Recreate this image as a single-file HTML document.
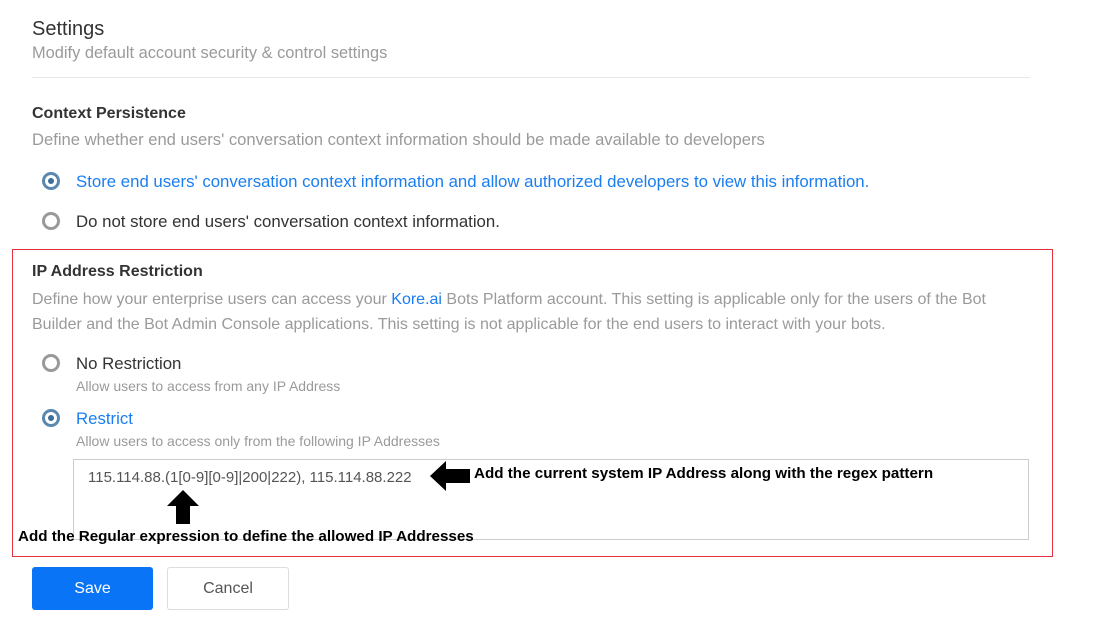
<!DOCTYPE html>
<html><head><style>
body{margin:0;width:1094px;height:640px;background:#fff;font-family:"Liberation Sans",sans-serif;position:relative;overflow:hidden}
.a{position:absolute;white-space:nowrap}
.g{color:#9a9a9a}
.t{color:#333}
.b{color:#1a7ef0}
.radio{position:absolute;width:12px;height:12px;border:3px solid #999;border-radius:50%;box-sizing:content-box}
.radio.on{border-color:#5a88b0}
.radio.on::after{content:"";position:absolute;left:3px;top:3px;width:6px;height:6px;border-radius:50%;background:#3d6e99}
</style></head><body>
<div class="a t" style="left:32px;top:18px;font-size:20px">Settings</div>
<div class="a g" style="left:32px;top:44px;font-size:16.4px">Modify default account security &amp; control settings</div>
<div class="a" style="left:32px;top:77px;width:998px;height:1px;background:#e6e6e6"></div>
<div class="a t" style="left:32px;top:105px;font-size:16px;font-weight:bold">Context Persistence</div>
<div class="a g" style="left:32px;top:130px;font-size:16.6px">Define whether end users' conversation context information should be made available to developers</div>
<div class="radio on" style="left:42px;top:172px"></div>
<div class="a b" style="left:76px;top:172px;font-size:16.8px">Store end users' conversation context information and allow authorized developers to view this information.</div>
<div class="radio" style="left:42px;top:212px"></div>
<div class="a t" style="left:76px;top:212px;font-size:16.8px">Do not store end users' conversation context information.</div>
<div class="a" style="left:12px;top:249px;width:1039px;height:306px;border:1px solid #e53040"></div>
<div class="a t" style="left:32px;top:263px;font-size:16px;font-weight:bold">IP Address Restriction</div>
<div class="a g" style="left:32px;top:287px;font-size:16px;line-height:25px;white-space:normal;width:1000px">Define how your enterprise users can access your <span class="b">Kore.ai</span> Bots Platform account. This setting is applicable only for the users of the Bot Builder and the Bot Admin Console applications. This setting is not applicable for the end users to interact with your bots.</div>
<div class="radio" style="left:42px;top:354px"></div>
<div class="a t" style="left:76px;top:354px;font-size:16.8px">No Restriction</div>
<div class="a g" style="left:76px;top:378px;font-size:14px">Allow users to access from any IP Address</div>
<div class="radio on" style="left:42px;top:409px"></div>
<div class="a b" style="left:76px;top:409px;font-size:16.8px">Restrict</div>
<div class="a g" style="left:76px;top:433px;font-size:14px">Allow users to access only from the following IP Addresses</div>
<div class="a" style="left:73px;top:459px;width:954px;height:79px;border:1px solid #ccc"></div>
<div class="a" style="left:88px;top:469px;font-size:15px;color:#555">115.114.88.(1[0-9][0-9]|200|222), 115.114.88.222</div>
<svg class="a" style="left:430px;top:459px" width="40" height="34"><polygon points="0,17 16,2 16,10 40,10 40,24 16,24 16,32" fill="#000"/></svg>
<div class="a" style="left:474px;top:465px;font-size:15.2px;font-weight:bold;color:#000">Add the current system IP Address along with the regex pattern</div>
<svg class="a" style="left:165px;top:490px" width="36" height="34"><polygon points="18,0 34,16 25,16 25,34 11,34 11,16 2,16" fill="#000"/></svg>
<div class="a" style="left:18px;top:528px;font-size:15.2px;font-weight:bold;color:#000">Add the Regular expression to define the allowed IP Addresses</div>
<div class="a" style="left:32px;top:567px;width:121px;height:43px;background:#0a74f7;border-radius:3px;color:#fff;font-size:16px;text-align:center;line-height:43px">Save</div>
<div class="a" style="left:167px;top:567px;width:120px;height:41px;border:1px solid #ddd;border-radius:3px;color:#555;font-size:16px;text-align:center;line-height:41px">Cancel</div>
</body></html>
